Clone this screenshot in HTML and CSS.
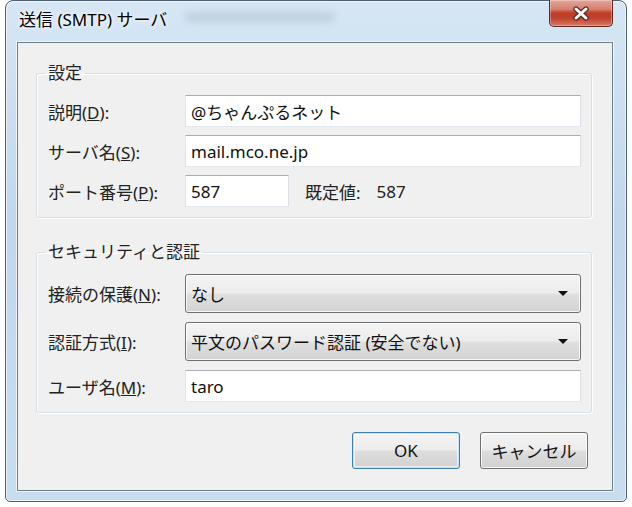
FILE: index.html
```html
<!DOCTYPE html>
<html lang="ja">
<head>
    <meta charset="UTF-8">
    <title>送信 (SMTP) サーバ</title>
    <link rel="stylesheet" href="styles.css">
</head>
<body>
    <div class="window">
        <div class="titlebar">
            <span class="title">送信 (SMTP) サーバ</span>
            <span class="ghost"></span>
            <button class="close" aria-label="閉じる">
                <svg width="20" height="15" viewBox="0 0 20 15">
                    <path d="M5 3 L15 12 M15 3 L5 12" stroke="#5a2a24" stroke-width="5.4" stroke-linecap="round"/>
                    <path d="M5 3 L15 12 M15 3 L5 12" stroke="#fff" stroke-width="3" stroke-linecap="round"/>
                </svg>
            </button>
        </div>
        <div class="client">
            <fieldset class="group">
                <legend>設定</legend>
                <div class="rows">
                    <label>説明(<u>D</u>):</label>
                    <div class="textbox">@ちゃんぷるネット</div>

                    <label>サーバ名(<u>S</u>):</label>
                    <div class="textbox">mail.mco.ne.jp</div>

                    <label>ポート番号(<u>P</u>):</label>
                    <div class="port-row">
                        <div class="textbox port">587</div>
                        <span class="default-label">既定値:</span>
                        <span>587</span>
                    </div>
                </div>
            </fieldset>

            <fieldset class="group security">
                <legend>セキュリティと認証</legend>
                <div class="rows">
                    <label>接続の保護(<u>N</u>):</label>
                    <div class="combo"><span>なし</span><i class="arrow"></i></div>

                    <label>認証方式(<u>I</u>):</label>
                    <div class="combo"><span>平文のパスワード認証 (安全でない)</span><i class="arrow"></i></div>

                    <label>ユーザ名(<u>M</u>):</label>
                    <div class="textbox">taro</div>
                </div>
            </fieldset>

            <div class="actions">
                <button class="btn default">OK</button>
                <button class="btn">キャンセル</button>
            </div>
        </div>
    </div>
</body>
</html>
```

FILE: styles.css
```css
body {
    margin: 0;
    background: #fff;
    font-family: "Noto Sans", "Noto Sans CJK JP", sans-serif;
    font-size: 17px;
    color: #222;
}
.window {
    box-sizing: border-box;
    width: 622px;
    height: 502px;
    margin-left: 5px;
    border: 1px solid #4e5e70;
    border-radius: 8px 8px 5px 5px;
    background: linear-gradient(180deg, #d6e6f4 0%, #c0d7ec 45%, #c9ddf0 100%);
    box-shadow: inset 0 0 0 1px rgba(255,255,255,0.65);
    padding: 0 13px 10px 11px;
    display: flex;
    flex-direction: column;
}
.titlebar {
    height: 41px;
    display: flex;
    align-items: flex-start;
    flex-shrink: 0;
}
.title {
    margin: 7px 0 0 2px;
    line-height: 24px;
    color: #000;
    text-shadow: 0 0 6px #fff, 0 0 3px #fff;
}
.ghost {
    width: 150px;
    height: 8px;
    margin: 12px 0 0 18px;
    background: rgba(80,100,125,0.2);
    border-radius: 4px;
    filter: blur(4px);
}
.close {
    margin-left: auto;
    margin-top: -1px;
    width: 64px;
    height: 27px;
    padding: 0;
    border: 1px solid #5e2a22;
    border-top: none;
    border-radius: 0 0 5px 5px;
    background: linear-gradient(180deg, #e3a699 0%, #d6806f 35%, #c23b25 50%, #c0422d 70%, #d57a67 100%);
    box-shadow: inset 0 0 0 1px rgba(255,255,255,0.3);
    display: flex;
    align-items: center;
    justify-content: center;
}
.client {
    flex: 1;
    background: #f0f0f0;
    border: 1px solid #6d7c8b;
    box-shadow: 0 0 0 1px rgba(255,255,255,0.7);
    padding: 20px 20px 0 18px;
    display: flex;
    flex-direction: column;
}
.group {
    margin: 0;
    padding: 12px 10px 10px 11px;
    border: 1px solid #d5dfe5;
    border-radius: 3px;
    box-shadow: inset 1px 1px 0 #fff, 1px 1px 0 #fff;
    min-width: 0;
}
.group legend {
    padding: 0 3px;
    margin-left: -3px;
    line-height: 20px;
}
.group.security {
    margin-top: 24px;
}
.rows {
    display: grid;
    grid-template-columns: 137px 1fr;
    row-gap: 8px;
    align-items: center;
}
.security .rows {
    row-gap: 9px;
}
.rows label {
    white-space: nowrap;
}
.textbox {
    box-sizing: border-box;
    height: 32px;
    padding: 0 5px;
    background: #fff;
    border: 1px solid;
    border-color: #abadb3 #dbdfe6 #e3e9ef #e2e3ea;
    display: flex;
    align-items: center;
    color: #111;
}
.port-row {
    display: flex;
    align-items: center;
}
.textbox.port {
    width: 104px;
}
.default-label {
    margin: 0 16px 0 16px;
}
.combo {
    box-sizing: border-box;
    height: 39px;
    padding: 0 12px 0 5px;
    border: 1px solid #707070;
    border-radius: 3px;
    background: linear-gradient(180deg, #f4f4f4 0%, #ececec 48%, #e0e0e0 52%, #d2d2d2 100%);
    box-shadow: inset 0 0 0 1px rgba(255,255,255,0.8);
    display: flex;
    align-items: center;
    justify-content: space-between;
    color: #111;
}
.arrow {
    width: 0;
    height: 0;
    border-left: 5px solid transparent;
    border-right: 5px solid transparent;
    border-top: 5px solid #111;
}
.actions {
    display: flex;
    justify-content: flex-end;
    gap: 20px;
    margin-top: 19px;
    padding-right: 4px;
}
.btn {
    box-sizing: border-box;
    width: 108px;
    height: 37px;
    font-family: inherit;
    font-size: 17px;
    color: #111;
    border: 1px solid #707070;
    border-radius: 3px;
    background: linear-gradient(180deg, #f4f4f4 0%, #ececec 48%, #dedede 52%, #d0d0d0 100%);
    box-shadow: inset 0 0 0 1px rgba(255,255,255,0.8);
    padding: 0;
}
.btn.default {
    border-color: #3c7fb1;
    box-shadow: inset 0 0 0 1px #bfe4f7, inset 0 0 0 2px rgba(255,255,255,0.6);
}
```
